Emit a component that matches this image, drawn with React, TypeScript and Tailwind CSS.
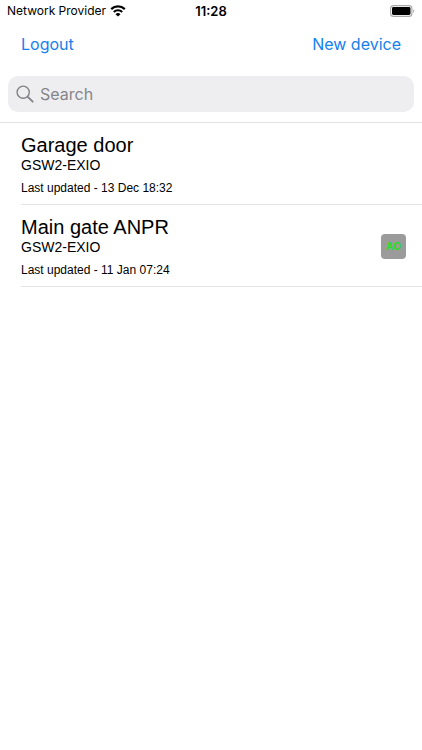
import { useState } from 'react'

interface Device {
  name: string
  model: string
  updated: string
  badge?: string
}

const devices: Device[] = [
  { name: 'Garage door', model: 'GSW2-EXIO', updated: '13 Dec 18:32' },
  { name: 'Main gate ANPR', model: 'GSW2-EXIO', updated: '11 Jan 07:24', badge: 'AO' },
]

function WifiIcon() {
  return (
    <svg width="16" height="12" viewBox="0 0 16 12" fill="none" stroke="#000" aria-hidden>
      <path d="M1.2 4.2a9.8 9.8 0 0 1 13.6 0" strokeWidth="2.3" />
      <path d="M3.8 7a6 6 0 0 1 8.4 0" strokeWidth="2.1" />
      <path d="M8 11.6 5.5 9.2a3.5 3.5 0 0 1 5 0z" fill="#000" stroke="none" />
    </svg>
  )
}

function BatteryIcon() {
  return (
    <svg width="25" height="12" viewBox="0 0 25 12" fill="none" aria-hidden>
      <rect x="0.6" y="0.6" width="21.3" height="10.8" rx="3" stroke="#a8a8a8" strokeWidth="1.1" />
      <rect x="2" y="2" width="18.5" height="8" rx="1.4" fill="#000" />
      <path d="M23.2 4.2c1.4.5 1.4 3.1 0 3.6z" fill="#a8a8a8" />
    </svg>
  )
}

function StatusBar() {
  return (
    <div className="grid h-[22px] grid-cols-[1fr_auto_1fr] items-center px-[7px] text-[12px] leading-4 text-black">
      <div className="flex items-center gap-1">
        <span>Network Provider</span>
        <WifiIcon />
      </div>
      <span className="text-[13px] font-semibold">11:28</span>
      <div className="flex justify-end">
        <BatteryIcon />
      </div>
    </div>
  )
}

function DeviceRow({ device }: { device: Device }) {
  return (
    <li className="ml-[21px] flex items-center border-b border-[#e4e4e6] pt-[11px] pr-4 pb-[9px]">
      <div className="flex-1">
        <h2 className="text-[20px] leading-[22px]">{device.name}</h2>
        <p className="text-[14px] leading-[18px]">{device.model}</p>
        <p className="mt-[7px] text-[12px] leading-[14px]">Last updated - {device.updated}</p>
      </div>
      {device.badge && (
        <span className="flex size-[25px] items-center justify-center rounded-[4px] bg-[#9b9b9b] text-[10px] font-bold text-[#22e022]">
          {device.badge}
        </span>
      )}
    </li>
  )
}

export default function App() {
  const [query, setQuery] = useState('')
  const visible = devices.filter((d) => d.name.toLowerCase().includes(query.toLowerCase()))

  return (
    <div className="min-h-screen bg-white font-['Liberation_Sans',Arial,sans-serif] text-black">
      <header className="border-b border-[#e4e4e6] font-[Inter,sans-serif]">
        <StatusBar />
        <nav className="flex h-11 items-center justify-between px-[21px] text-[16px] text-[#1580ef]">
          <button type="button">Logout</button>
          <button type="button">New device</button>
        </nav>
        <div className="px-2 py-[10px]">
          <label className="flex h-9 items-center gap-[6px] rounded-[10px] bg-[#eeeef0] px-2">
            <svg width="18" height="18" viewBox="0 0 18 18" fill="none" stroke="#828287" strokeLinecap="round" aria-hidden>
              <circle cx="7.2" cy="7.2" r="6.1" strokeWidth="1.4" />
              <path d="m11.8 11.8 4.9 4.9" strokeWidth="1.8" />
            </svg>
            <input
              type="text"
              aria-label="Search"
              placeholder="Search"
              value={query}
              onChange={(e) => setQuery(e.target.value)}
              className="min-w-0 flex-1 bg-transparent text-[16px] outline-none placeholder:text-[#85858a]"
            />
          </label>
        </div>
      </header>

      <ul>
        {visible.map((device) => (
          <DeviceRow key={device.name} device={device} />
        ))}
      </ul>
    </div>
  )
}
